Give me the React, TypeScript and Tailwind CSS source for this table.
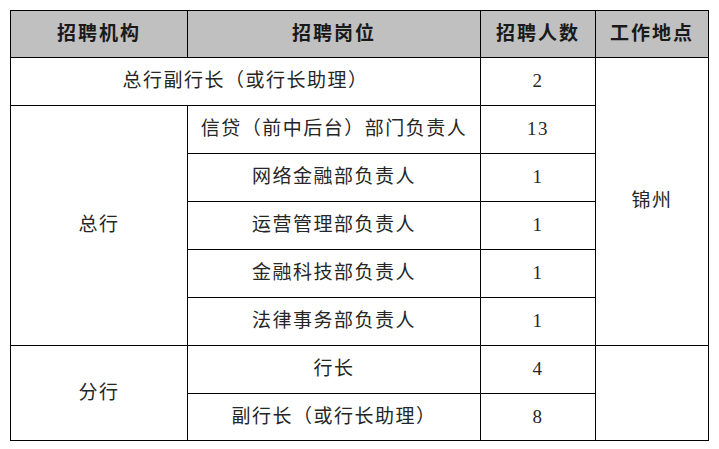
import React from "react";

const font = { fontFamily: '"Liberation Serif", "Noto Sans CJK SC", serif' } as const;

export default function App() {
  const cell = "border border-black text-center align-middle p-0";
  const rows: [string, string][] = [
    ["信贷（前中后台）部门负责人", "13"],
    ["网络金融部负责人", "1"],
    ["运营管理部负责人", "1"],
    ["金融科技部负责人", "1"],
    ["法律事务部负责人", "1"],
  ];
  return (
    <div className="w-[719px] h-[449px] bg-white pt-[10px] pl-[10px]" style={font}>
      <table className="border-collapse table-fixed w-[698px] text-[19px] text-[#262626] tracking-[1.5px]">
        <colgroup>
          <col className="w-[177px]" />
          <col className="w-[293px]" />
          <col className="w-[115px]" />
          <col className="w-[113px]" />
        </colgroup>
        <tbody>
          <tr className="h-[47px] bg-[#c0c0c0] font-bold text-[#1a1a1a]">
            <td className={`${cell} tracking-[2px]`}>招聘机构</td>
            <td className={`${cell} tracking-[2px]`}>招聘岗位</td>
            <td className={`${cell} tracking-[2px]`}>招聘人数</td>
            <td className={`${cell} tracking-[2px]`}>工作地点</td>
          </tr>
          <tr className="h-[48px]">
            <td className={cell} colSpan={2}>总行副行长（或行长助理）</td>
            <td className={cell}>2</td>
            <td className={cell} rowSpan={6}>锦州</td>
          </tr>
          {rows.map(([name, n], i) => (
            <tr key={i} className="h-[48px]">
              {i === 0 && (
                <td className={cell} rowSpan={5}>总行</td>
              )}
              <td className={cell}>{name}</td>
              <td className={cell}>{n}</td>
            </tr>
          ))}
          <tr className="h-[48px]">
            <td className={cell} rowSpan={2}>分行</td>
            <td className={cell}>行长</td>
            <td className={cell}>4</td>
            <td className={cell} rowSpan={2}></td>
          </tr>
          <tr className="h-[47px]">
            <td className={cell}>副行长（或行长助理）</td>
            <td className={cell}>8</td>
          </tr>
        </tbody>
      </table>
    </div>
  );
}
